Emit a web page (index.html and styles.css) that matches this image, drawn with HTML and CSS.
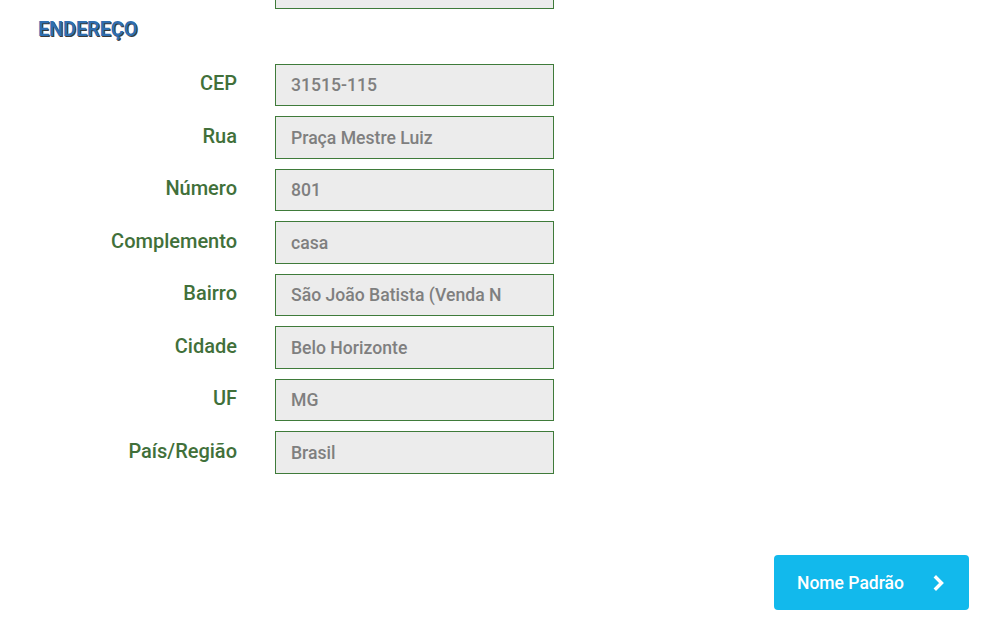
FILE: index.html
```html
<!DOCTYPE html>
<html lang="pt-BR">
<head>
<meta charset="utf-8">
<title>Endereço</title>
<link rel="stylesheet" href="styles.css">
</head>
<body>
<div class="page">
  <div class="form">
    <div class="row">
      <div class="label"></div>
      <div class="field"></div>
    </div>
    <h2 class="section-title">ENDEREÇO</h2>
    <div class="row"><div class="label">CEP</div><div class="field">31515-115</div></div>
    <div class="row"><div class="label">Rua</div><div class="field">Praça Mestre Luiz</div></div>
    <div class="row"><div class="label">Número</div><div class="field">801</div></div>
    <div class="row"><div class="label">Complemento</div><div class="field">casa</div></div>
    <div class="row"><div class="label">Bairro</div><div class="field">São João Batista (Venda N</div></div>
    <div class="row"><div class="label">Cidade</div><div class="field">Belo Horizonte</div></div>
    <div class="row"><div class="label">UF</div><div class="field">MG</div></div>
    <div class="row"><div class="label">País/Região</div><div class="field">Brasil</div></div>
  </div>
  <div class="actions">
    <button class="btn-next" type="button">
      <span>Nome Padrão</span>
      <svg class="chev" width="12" height="16" viewBox="0 0 12 16" aria-hidden="true"><path d="M3 2.5 L8.5 8 L3 13.5" fill="none" stroke="#fff" stroke-width="3.4" stroke-linecap="square" stroke-linejoin="miter"/></svg>
    </button>
  </div>
</div>
</body>
</html>
```
FILE: styles.css
```css
html, body {
  margin: 0;
  padding: 0;
  background: #fff;
  font-family: Roboto, "Liberation Sans", sans-serif;
}
.page {
  width: 986px;
  height: 633px;
  overflow: hidden;
}
.form {
  margin-top: -34px;
}
.row {
  display: flex;
  align-items: flex-start;
  height: 42.5px;
  margin-bottom: 10px;
}
.label {
  width: 237px;
  flex: 0 0 237px;
  text-align: right;
  padding-top: 8.5px;
  font-size: 20px;
  line-height: 23px;
  font-weight: 500;
  color: #41703a;
}
.field {
  margin-left: 38px;
  height: 39.5px;
  box-sizing: content-box;
  border: 1px solid #3f7b3a;
  background: #ececec;
  padding: 1px 0 0 15px;
  width: 262px;
  display: flex;
  align-items: center;
  font-size: 17.6px;
  font-weight: 500;
  color: #7f7f7f;
  white-space: nowrap;
  overflow: hidden;
}
.section-title {
  margin: 2.5px 0 25px 38px;
  height: 20px;
  font-size: 20px;
  line-height: 20px;
  font-weight: 700;
  letter-spacing: -0.15px;
  color: #2f6eb0;
  text-shadow: 1px 1px 0 #3a3a3a;
}
.actions {
  display: flex;
  justify-content: flex-end;
  padding: 71px 17px 0 0;
}
.btn-next {
  width: 195px;
  height: 55px;
  border: none;
  border-radius: 4px;
  background: #12b9ec;
  color: #fff;
  font-family: Roboto, "Liberation Sans", sans-serif;
  font-size: 17.5px;
  font-weight: 500;
  display: flex;
  align-items: center;
  justify-content: space-between;
  padding: 2px 24px 0 23px;
  cursor: pointer;
}
.chev {
  display: block;
}
```
